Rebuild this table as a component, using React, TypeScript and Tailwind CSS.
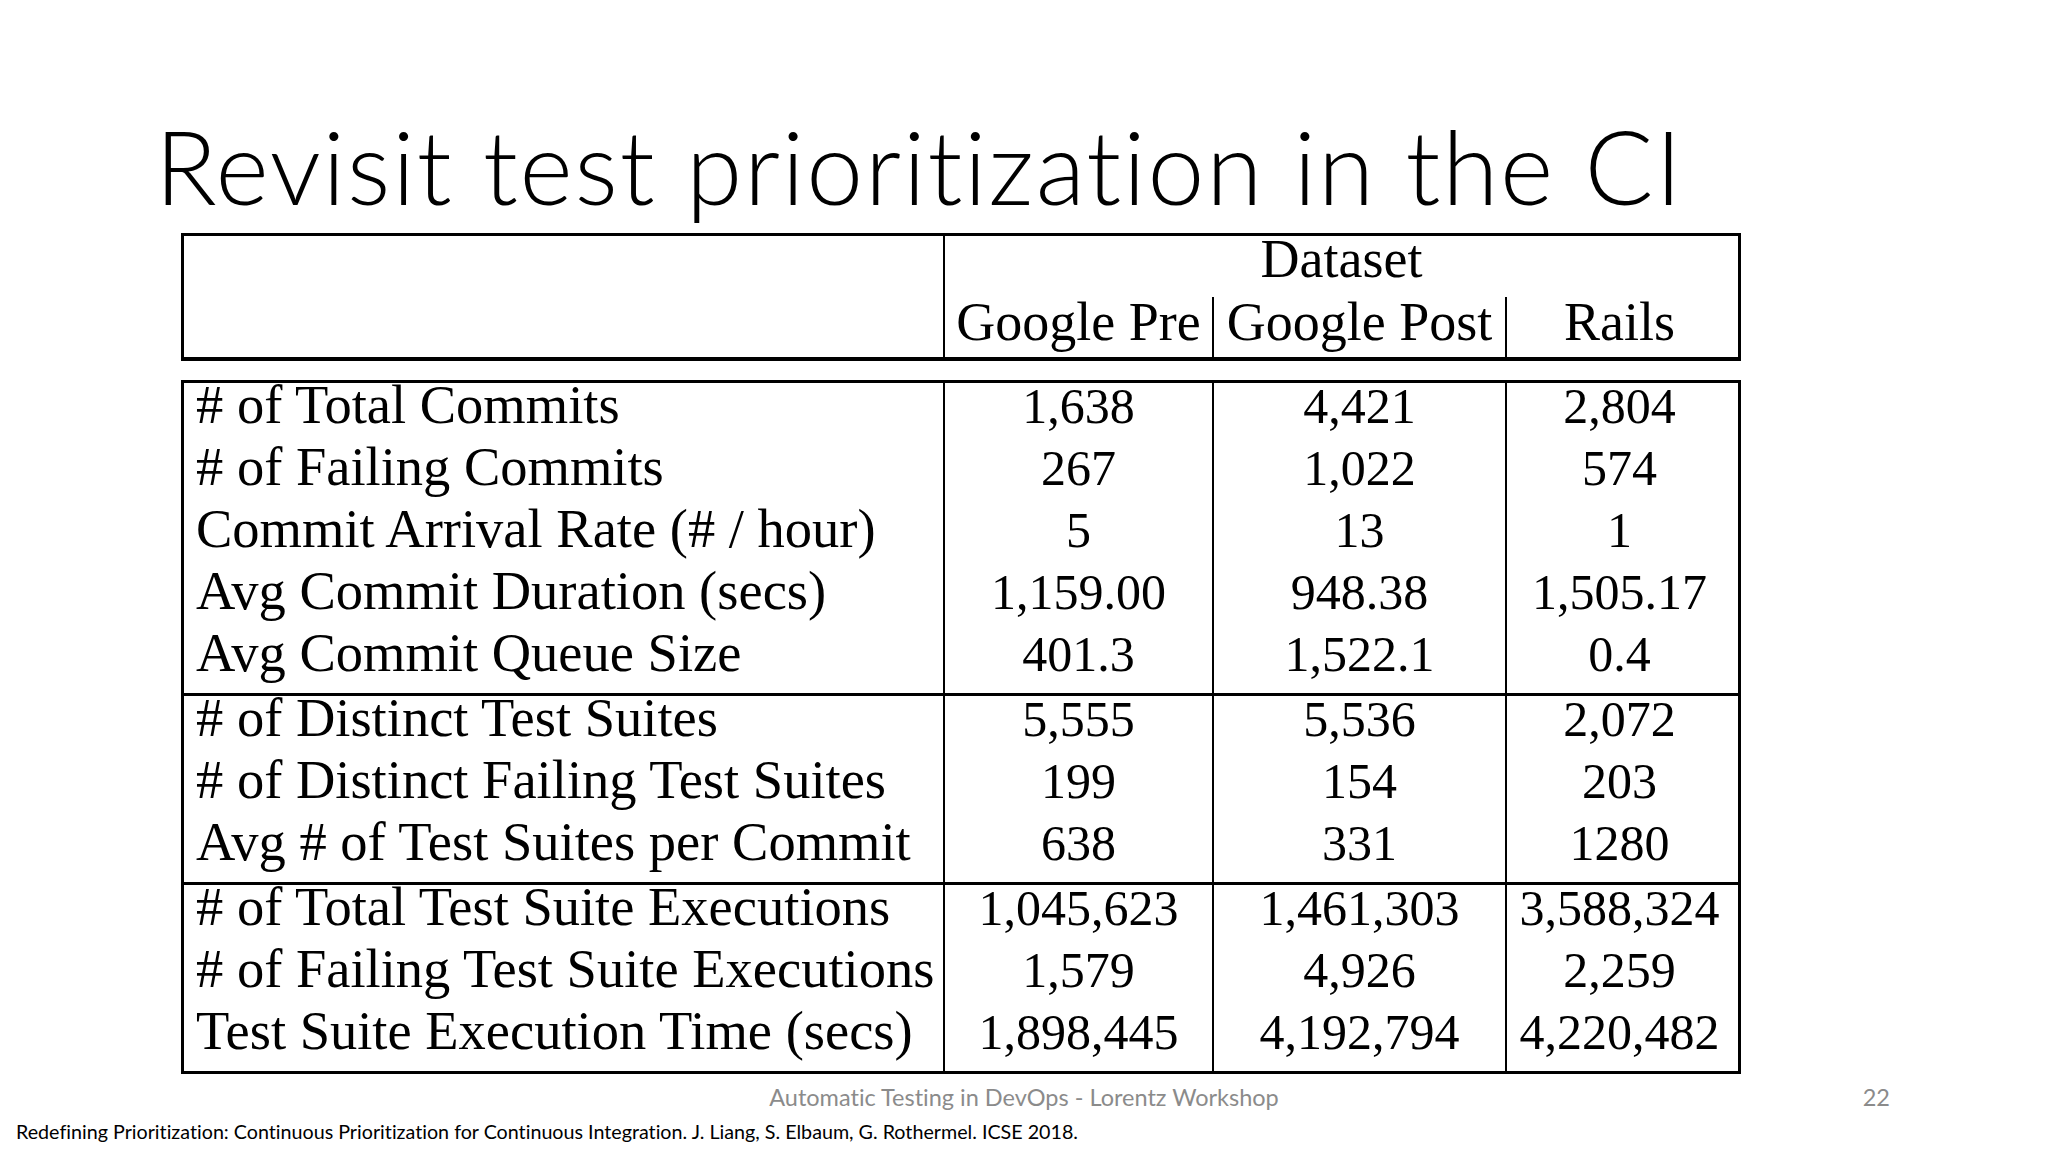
import React from "react";

const sections: { label: string; v: [string, string, string] }[][] = [
  [
    { label: "# of Total Commits", v: ["1,638", "4,421", "2,804"] },
    { label: "# of Failing Commits", v: ["267", "1,022", "574"] },
    { label: "Commit Arrival Rate (# / hour)", v: ["5", "13", "1"] },
    { label: "Avg Commit Duration (secs)", v: ["1,159.00", "948.38", "1,505.17"] },
    { label: "Avg Commit Queue Size", v: ["401.3", "1,522.1", "0.4"] },
  ],
  [
    { label: "# of Distinct Test Suites", v: ["5,555", "5,536", "2,072"] },
    { label: "# of Distinct Failing Test Suites", v: ["199", "154", "203"] },
    { label: "Avg # of Test Suites per Commit", v: ["638", "331", "1280"] },
  ],
  [
    { label: "# of Total Test Suite Executions", v: ["1,045,623", "1,461,303", "3,588,324"] },
    { label: "# of Failing Test Suite Executions", v: ["1,579", "4,926", "2,259"] },
    { label: "Test Suite Execution Time (secs)", v: ["1,898,445", "4,192,794", "4,220,482"] },
  ],
];

const serif = { fontFamily: '"Liberation Serif", "DejaVu Serif", serif' };
const sans = { fontFamily: 'Lato, "Open Sans", "Liberation Sans", sans-serif' };

const colW = ["w-[269px]", "w-[293px]", "w-[225px]"];

function Section({ rows, last }: { rows: { label: string; v: [string, string, string] }[]; last: boolean }) {
  return (
    <div className={`flex ${last ? "" : "border-b-[3px] border-black"}`}>
      <div className="w-[761px] border-r-2 border-black pl-[12px]">
        {rows.map((r) => (
          <div key={r.label} className="h-[62px] text-[54.5px] leading-[44px] whitespace-nowrap text-black">
            {r.label}
          </div>
        ))}
      </div>
      {[0, 1, 2].map((c) => (
        <div key={c} className={`${colW[c]} ${c < 2 ? "border-r-2 border-black" : ""}`}>
          {rows.map((r) => (
            <div key={r.label + c} className="h-[62px] text-[50px] leading-[46px] text-center whitespace-nowrap text-black">
              {r.v[c]}
            </div>
          ))}
        </div>
      ))}
    </div>
  );
}

export default function App() {
  return (
    <div className="w-[2048px] h-[1152px] bg-white flex flex-col overflow-hidden [font-variant-ligatures:none]">
      <h1
        className="pl-[155px] pt-[115px] text-[102px] leading-none font-light tracking-[1.8px] text-black whitespace-nowrap [font-variant-ligatures:none]"
        style={sans}
      >
        Revisit test prioritization in the CI
      </h1>

      <div className="ml-[181px] w-[1560px] mt-[16px] flex flex-col" style={serif}>
        {/* header box */}
        <div className="flex border-[3px] border-b-4 border-black h-[128px]">
          <div className="w-[761px] border-r-2 border-black" />
          <div className="flex-1 flex flex-col">
            <div className="h-[61px] pt-[1px] text-[54px] leading-[44px] text-center text-black">Dataset</div>
            <div className="flex flex-1">
              <div className="w-[269px] border-r-2 border-black pt-[3px] text-[54px] leading-[44px] text-center whitespace-nowrap text-black">
                Google Pre
              </div>
              <div className="w-[293px] border-r-2 border-black pt-[3px] text-[54px] leading-[44px] text-center whitespace-nowrap text-black">
                Google Post
              </div>
              <div className="w-[225px] pt-[3px] text-[54px] leading-[44px] text-center whitespace-nowrap text-black">
                Rails
              </div>
            </div>
          </div>
        </div>

        {/* body box */}
        <div className="mt-[19px] border-[3px] border-black flex flex-col">
          {sections.map((s, i) => (
            <Section key={i} rows={s} last={i === sections.length - 1} />
          ))}
        </div>
      </div>

      <div className="relative mt-[12px] h-[24px] [font-variant-ligatures:none]" style={sans}>
        <div className="text-center text-[23.5px] leading-none text-[#8b8b8b]">
          Automatic Testing in DevOps - Lorentz Workshop
        </div>
        <div className="absolute right-[158px] top-0 text-[23.5px] leading-none text-[#8b8b8b]">22</div>
      </div>

      <div
        className="pl-[16px] mt-[12px] text-[19.7px] leading-none text-black whitespace-nowrap [font-variant-ligatures:none]"
        style={sans}
      >
        Redefining Prioritization: Continuous Prioritization for Continuous Integration. J. Liang, S. Elbaum, G. Rothermel. ICSE 2018.
      </div>
    </div>
  );
}
